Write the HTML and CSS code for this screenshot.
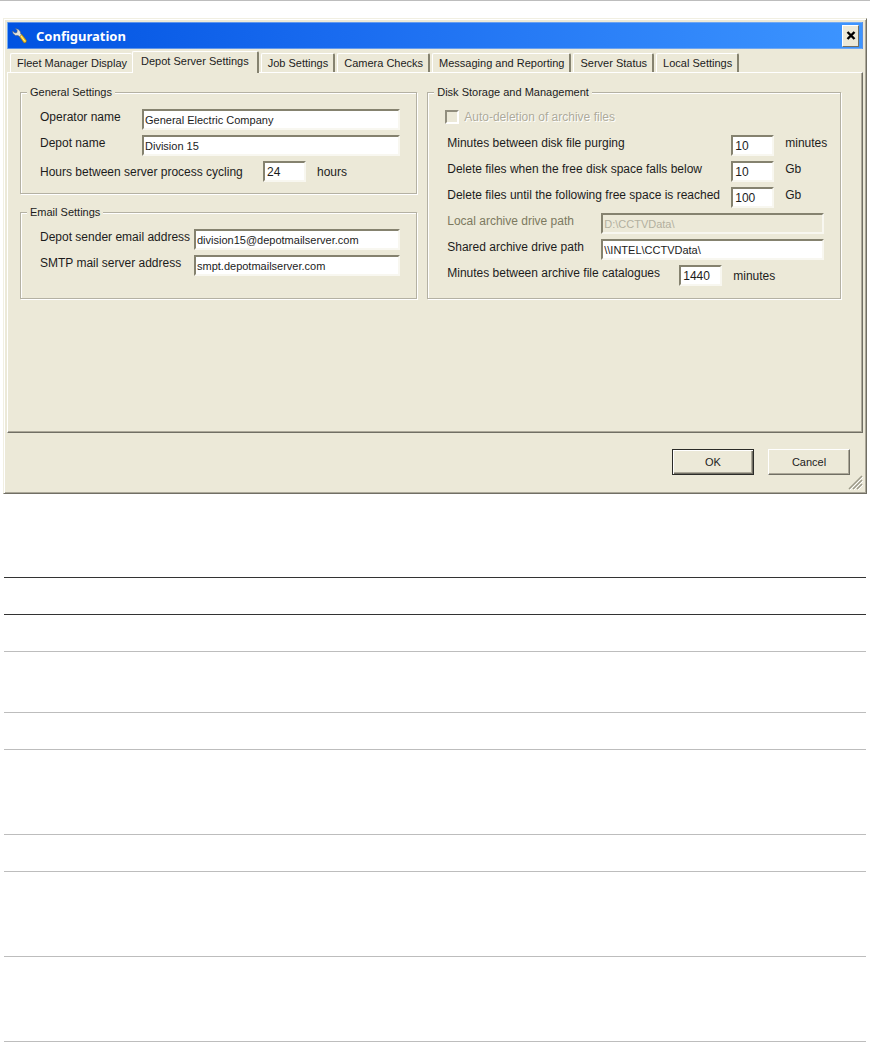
FILE: index.html
```html
<!DOCTYPE html>
<html lang="en">
<head>
  <meta charset="UTF-8" />
  <meta name="viewport" content="width=device-width, initial-scale=1.0" />
  <title>Configuration</title>
  <link rel="stylesheet" href="styles.css">
</head>
<body>
  <div class="page">
    <form class="window">
      <div class="title-bar">
        <svg class="title-icon" width="16" height="16" viewBox="0 0 16 16" aria-hidden="true">
          <path d="M7 8 L9.500 6 L14.500 12.500 L14 14.500 L12 15 Z" fill="#f5c518" stroke="#7a5a20" stroke-width="0.500" />
          <path d="M9 8 L13 13.500" stroke="#fff0a0" stroke-width="1" />
          <path d="M3.500 0.500 L6.500 1.500 L8.500 4 L8.500 5.500 L9.500 7 L7.500 8.500 L6 7.500 L3.500 7.500 L1 5.500 L0.500 3 L3 5 L5 4.500 L5.200 2.500 Z" fill="#e4e4dc" stroke="#55606c" stroke-width="0.500" />
        </svg>
        <h1 class="title">Configuration</h1>
        <button type="button" class="close-button" aria-label="Close">
          <svg width="10" height="9" viewBox="0 0 10 9" aria-hidden="true">
            <path d="M1.500 1 L8.500 8 M8.500 1 L1.500 8" stroke="#000" stroke-width="2.400" />
          </svg>
        </button>
      </div>

      <div class="tabs" role="tablist">
        <button type="button" class="tab" role="tab">Fleet Manager Display</button>
        <button type="button" class="tab active" role="tab" aria-selected="true">Depot Server Settings</button>
        <button type="button" class="tab" role="tab">Job Settings</button>
        <button type="button" class="tab" role="tab">Camera Checks</button>
        <button type="button" class="tab" role="tab">Messaging and Reporting</button>
        <button type="button" class="tab" role="tab">Server Status</button>
        <button type="button" class="tab" role="tab">Local Settings</button>
      </div>

      <div class="panel" role="tabpanel">
        <div class="column">
          <fieldset class="group">
            <legend>General Settings</legend>
            <div class="row general">
              <label for="operatorName">Operator name</label>
              <input type="text" id="operatorName" value="General Electric Company">
            </div>
            <div class="row general">
              <label for="depotName">Depot name</label>
              <input type="text" id="depotName" value="Division 15">
            </div>
            <div class="row cycling">
              <label for="cycleHours">Hours between server process cycling</label>
              <input type="text" class="number" id="cycleHours" value="24">
              <span class="unit">hours</span>
            </div>
          </fieldset>

          <fieldset class="group grow">
            <legend>Email Settings</legend>
            <div class="row wide">
              <label for="senderEmail">Depot sender email address</label>
              <input type="text" id="senderEmail" value="division15@depotmailserver.com">
            </div>
            <div class="row wide">
              <label for="smtpServer">SMTP mail server address</label>
              <input type="text" id="smtpServer" value="smpt.depotmailserver.com">
            </div>
          </fieldset>
        </div>

        <div class="column">
          <fieldset class="group grow">
            <legend>Disk Storage and Management</legend>
            <div class="row check">
              <input type="checkbox" id="autoDelete" disabled>
              <label for="autoDelete">Auto-deletion of archive files</label>
            </div>
            <div class="row disk">
              <label for="purgeMinutes">Minutes between disk file purging</label>
              <input type="text" class="number" id="purgeMinutes" value="10">
              <span class="unit">minutes</span>
            </div>
            <div class="row disk">
              <label for="deleteBelow">Delete files when the free disk space falls below</label>
              <input type="text" class="number" id="deleteBelow" value="10">
              <span class="unit">Gb</span>
            </div>
            <div class="row disk">
              <label for="deleteUntil">Delete files until the following free space is reached</label>
              <input type="text" class="number" id="deleteUntil" value="100">
              <span class="unit">Gb</span>
            </div>
            <div class="row wide muted">
              <label for="localPath">Local archive drive path</label>
              <input type="text" id="localPath" value="D:\CCTVData\" disabled>
            </div>
            <div class="row wide">
              <label for="sharedPath">Shared archive drive path</label>
              <input type="text" id="sharedPath" value="\\INTEL\CCTVData\">
            </div>
            <div class="row catalogue">
              <label for="catalogueMinutes">Minutes between archive file catalogues</label>
              <input type="text" class="number" id="catalogueMinutes" value="1440">
              <span class="unit">minutes</span>
            </div>
          </fieldset>
        </div>
      </div>

      <div class="actions">
        <button type="button" class="button default">OK</button>
        <button type="button" class="button">Cancel</button>
      </div>

      <svg class="grip" width="15" height="15" viewBox="0 0 15 15" aria-hidden="true">
        <path d="M2 15 L15 2 M6 15 L15 6 M10 15 L15 10" stroke="#fff" stroke-width="1" />
        <path d="M1 14 L14 1 M5 14 L14 5 M9 14 L14 9" stroke="#9d9a8a" stroke-width="1.500" />
      </svg>
    </form>

    <div class="rules">
      <div class="line dark"></div>
      <div class="line dark"></div>
      <div class="line"></div>
      <div class="line medium"></div>
      <div class="line"></div>
      <div class="line tall"></div>
      <div class="line"></div>
      <div class="line tall"></div>
      <div class="line tall"></div>
    </div>
  </div>
</body>
</html>
```
FILE: styles.css
```css
:root {
  --face: #ece9d8;
  --shadow: #aca899;
  --dark: #716f64;
  --text: #1c1c1c;
  --rule: #bdbdbd;
  --font-text: "Liberation Sans", Arial, sans-serif;
  --font-title: "Noto Sans", "Trebuchet MS", sans-serif;
}

* {
  box-sizing: border-box;
}

body {
  margin: 0;
  background: #fff;
  color: var(--text);
  font-family: var(--font-text);
  font-size: 12px;
  line-height: 14px;
}

button,
input {
  font: inherit;
  color: inherit;
}

.page {
  border-top: 1px solid var(--rule);
  padding: 17px 3px 0;
}

/* window frame */
.window {
  position: relative;
  padding: 3px;
  background: var(--face);
  border: 1px solid;
  border-color: #f1efe2 var(--dark) var(--dark) #f1efe2;
  box-shadow: inset 1px 1px #fff, inset -1px -1px var(--shadow);
}

.title-bar {
  display: flex;
  align-items: center;
  gap: 8px;
  height: 27px;
  padding: 0 3px 0 4px;
  background: linear-gradient(90deg, #0153e1 0%, #1a6cf0 40%, #3d95ff 100%);
  border: 1px solid rgba(150, 185, 235, 0.6);
}

.title {
  flex: 1;
  margin: 0;
  color: #fff;
  font-family: var(--font-title);
  font-size: 13px;
  font-weight: bold;
}

.close-button {
  display: flex;
  align-items: center;
  justify-content: center;
  width: 17px;
  height: 22px;
  padding: 0;
  background: var(--face);
  border: 1px solid;
  border-color: #fff var(--dark) var(--dark) #fff;
}

/* tabs */
.tabs {
  display: flex;
  align-items: flex-end;
  gap: 2px;
  padding: 2px 3px 0;
}

.tab {
  height: 19px;
  padding: 0 5px 0 6px;
  background: var(--face);
  border: 1px solid;
  border-width: 1px 2px 0 1px;
  border-color: #fff #85826f #fff #fff;
  border-radius: 2px 2px 0 0;
  font-size: 11px;
  white-space: nowrap;
}

.tab:first-child {
  margin-right: -2px;
  border-right: 0;
}

.tab.active {
  position: relative;
  height: 22px;
  margin-bottom: -1px;
  padding: 0 8px 3px;
}

.panel {
  display: grid;
  grid-template-columns: 24fr 25fr;
  align-items: start;
  gap: 10px;
  min-height: 361px;
  padding: 12px 21px 12px 12px;
  border: 1px solid;
  border-color: #fff var(--dark) var(--dark) #fff;
  box-shadow: inset -1px -1px var(--shadow);
}

.column {
  display: flex;
  flex-direction: column;
  gap: 11px;
  min-width: 0;
  height: 214px;
}

/* group boxes */
.group {
  min-width: 0;
  margin: 0;
  padding: 10px 16px 6px 19px;
  border: 1px solid #b4b1a3;
  box-shadow: 1px 1px #fff, inset 1px 1px #fff;
}

.group.grow {
  flex: 1;
}

.group legend {
  margin-left: -13px;
  padding: 0 3px;
  background: var(--face);
  font-size: 11px;
}

.row {
  display: grid;
  align-items: start;
  height: 26px;
}

.row.general {
  grid-template-columns: 102px 1fr;
}

.row.wide {
  grid-template-columns: 154px 1fr;
}

.row.disk {
  grid-template-columns: 284px 43px 1fr;
}

.row.cycling {
  grid-template-columns: 223px 43px 1fr;
}

.row.catalogue {
  grid-template-columns: 232px 43px 1fr;
}

.row.check {
  grid-template-columns: 14px 1fr;
  gap: 5px;
  margin-left: -2px;
}

.row label,
.unit {
  padding-top: 1px;
  white-space: nowrap;
}

.unit {
  padding-left: 11px;
}

.cycling label,
.cycling .unit,
.catalogue .unit {
  padding-top: 4px;
}

.row input[type="text"] {
  width: 100%;
  min-width: 0;
  height: 21px;
  padding: 1px 1px 0;
  background: #fff;
  border: 2px solid;
  border-color: #85826f #f8f7f0 #f8f7f0 #85826f;
  border-radius: 0;
  font-size: 11px;
}

.row input.number[type="text"] {
  padding-left: 2px;
  font-size: 12px;
}

.row input[type="text"]:disabled {
  background: var(--face);
  color: #b3b09f;
}

.row input[type="checkbox"] {
  appearance: none;
  width: 14px;
  height: 14px;
  margin: 1px 0 0;
  border: 2px solid;
  border-color: #918e7e #fff #fff #918e7e;
}

.check label {
  color: #aeab9b;
  text-shadow: 1px 1px #fff;
}

.muted label {
  color: #7c795f;
}

/* bottom buttons */
.actions {
  display: flex;
  justify-content: flex-end;
  gap: 14px;
  padding: 16px 13px 15px;
}

.button {
  width: 82px;
  height: 26px;
  padding: 0;
  background: var(--face);
  border: 1px solid;
  border-color: #fff var(--dark) var(--dark) #fff;
  box-shadow: inset -1px -1px var(--shadow);
  font-size: 11px;
}

.button.default {
  border-color: #2b2b28;
  box-shadow: inset 1px 1px #fff, inset -1px -1px var(--dark), inset -2px -2px var(--shadow);
}

.grip {
  position: absolute;
  right: 3px;
  bottom: 3px;
}

/* ruled lines below the window */
.rules {
  margin: 47px 1px 0;
}

.line {
  height: 37px;
  border-bottom: 1px solid var(--rule);
}

.line.dark {
  border-color: #333;
}

.line.medium {
  height: 61px;
}

.line.tall {
  height: 85px;
}
```
